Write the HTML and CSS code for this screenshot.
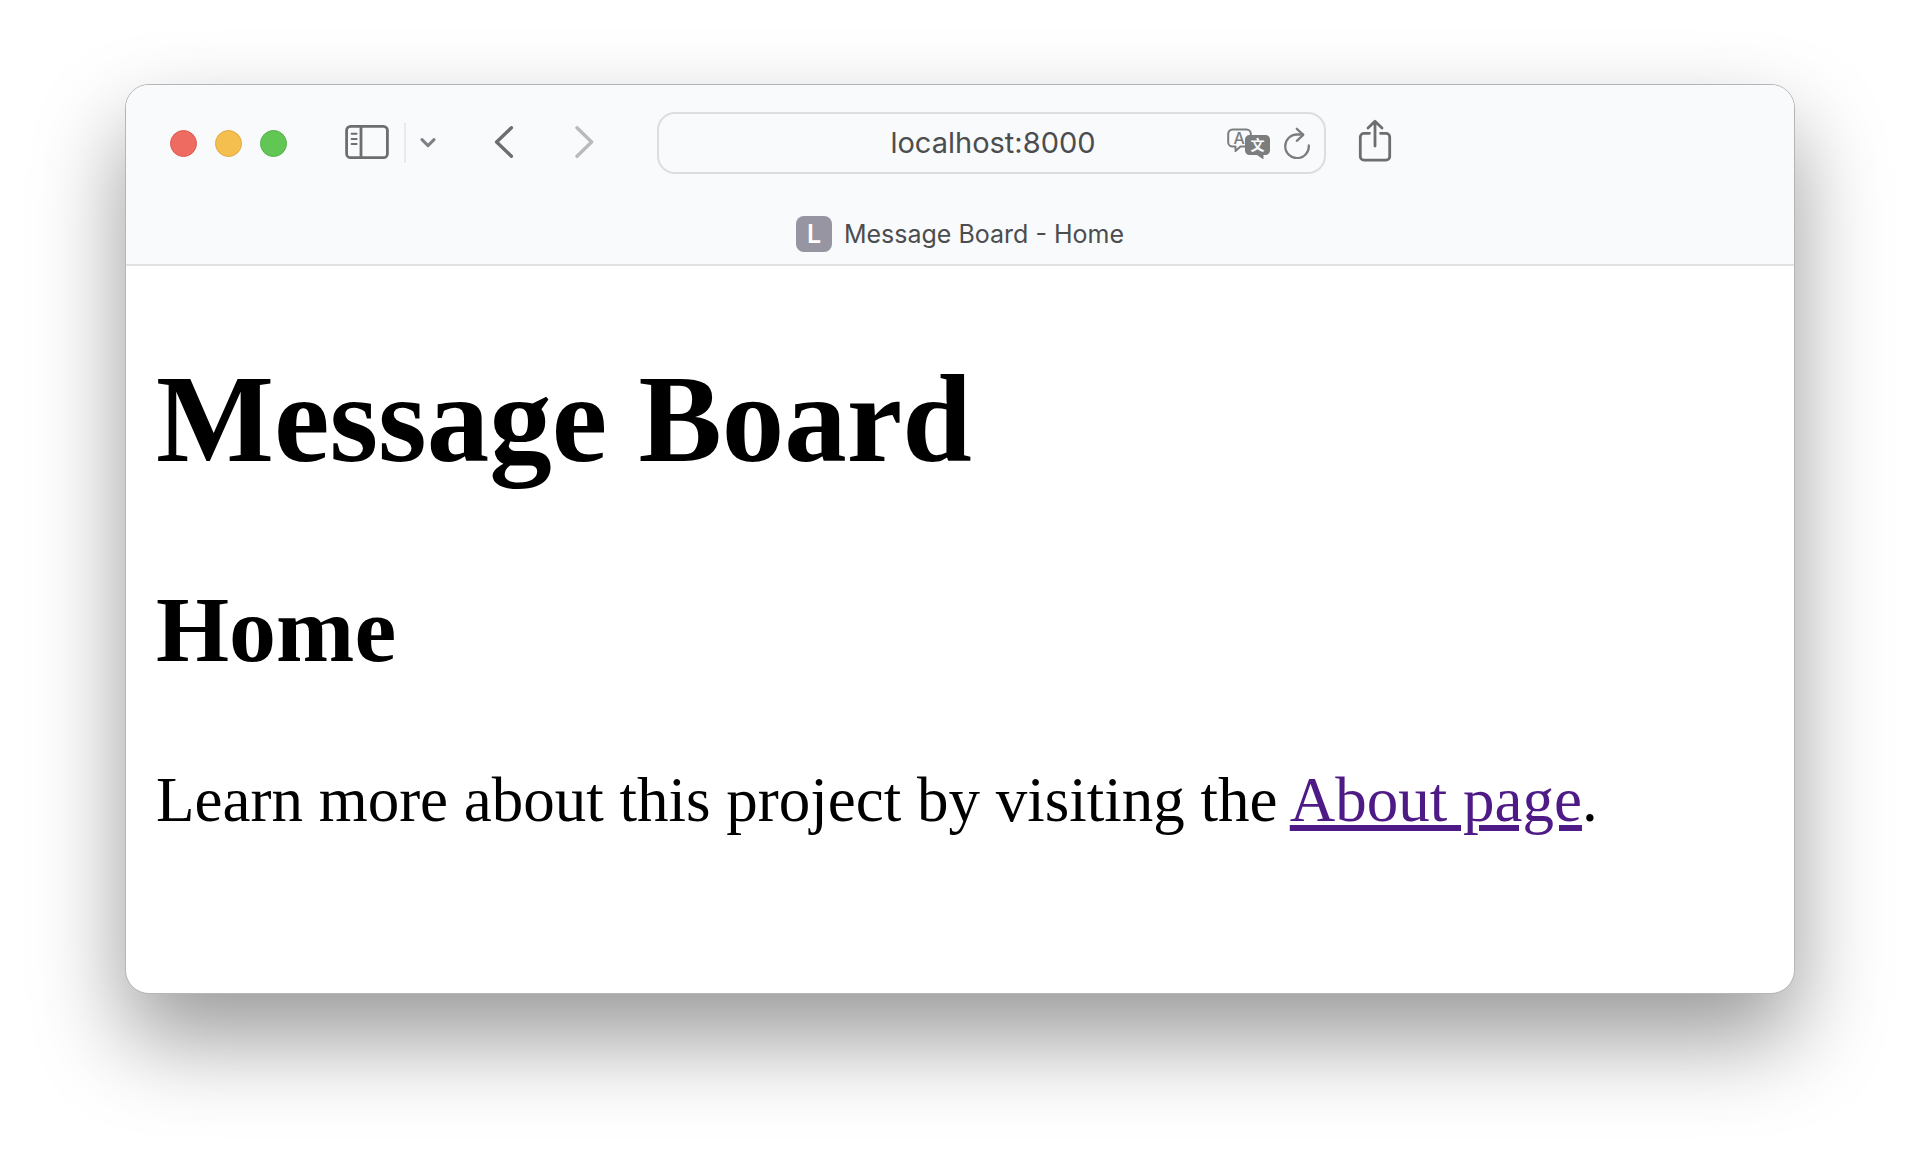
FILE: index.html
```html
<!DOCTYPE html>
<html lang="en">
<head>
<meta charset="utf-8">
<title>Message Board - Home</title>
<link rel="stylesheet" href="styles.css">
</head>
<body>
<div class="window">
  <header class="chrome">
    <div class="toolbar">
      <div class="lights">
        <button class="light light-close" aria-label="Close"></button>
        <button class="light light-minimize" aria-label="Minimize"></button>
        <button class="light light-zoom" aria-label="Zoom"></button>
      </div>
      <div class="sidebar-group">
        <button class="icon-button" aria-label="Show sidebar">
          <svg width="44" height="38" viewBox="0 0 44 38" fill="none" stroke="#6e6e71" stroke-width="2.8" stroke-linecap="round"><rect x="1.6" y="2.300" width="40.800" height="31.400" rx="4"/><path d="M16 3v30"/><path d="M6.600 9.800h5M6.600 15h5M6.600 20h5" stroke-width="2"/></svg>
        </button>
        <span class="divider"></span>
        <button class="icon-button" aria-label="Tab groups">
          <svg width="16" height="12" viewBox="0 0 16 12" fill="none" stroke="#7f7f86" stroke-width="3" stroke-linecap="round" stroke-linejoin="round"><path d="M2 2.600l6 6 6-6"/></svg>
        </button>
      </div>
      <nav class="history">
        <button class="icon-button" aria-label="Back">
          <svg width="20" height="36" viewBox="0 0 20 36" fill="none" stroke="#6e6e71" stroke-width="3.400" stroke-linecap="round" stroke-linejoin="round"><path d="M17.400 2.800L2.600 17l14.800 14.200"/></svg>
        </button>
        <button class="icon-button" aria-label="Forward">
          <svg width="20" height="36" viewBox="0 0 20 36" fill="none" stroke="#b9babc" stroke-width="3.400" stroke-linecap="round" stroke-linejoin="round"><path d="M3 2.800L17.600 17 3 31.200"/></svg>
        </button>
      </nav>
      <div class="address">
        <input class="address-input" type="text" value="localhost:8000" aria-label="Address">
        <button class="icon-button" aria-label="Translate">
          <svg width="43" height="32" viewBox="0 0 43 32"><path d="M18 19.500h-4.500L8.500 24V19.500H5.500a4.300 4.300 0 0 1-4.300-4.300V6.800A4.300 4.300 0 0 1 5.500 2.500h14a4.300 4.300 0 0 1 4.300 4.300V8" fill="none" stroke="#7c7e7e" stroke-width="2" stroke-linejoin="round"/><text class="glyph-latin" x="12.200" y="17" text-anchor="middle">A</text><path d="M22.500 8h16a4.500 4.500 0 0 1 4.500 4.500v11a4.500 4.500 0 0 1-4.500 4.500h-2v4.500l-6.500-4.500h-7.500A4.500 4.500 0 0 1 18 23.500v-11a4.500 4.500 0 0 1 4.500-4.500z" fill="#7c7e7e"/><text class="glyph-han" x="30.500" y="23" text-anchor="middle">文</text></svg>
        </button>
        <button class="icon-button" aria-label="Reload">
          <svg width="26" height="32" viewBox="0 0 26 32" fill="none" stroke="#7c7e7e" stroke-width="2.300" stroke-linecap="round" stroke-linejoin="round"><path d="M24.800 18.500A11.800 11.800 0 1 1 13 7.500h6"/><path d="M12.800 1.800l6.500 6-6.500 6"/></svg>
        </button>
      </div>
      <button class="icon-button" aria-label="Share">
        <svg width="34" height="48" viewBox="0 0 34 48" fill="none" stroke="#6e6e71" stroke-width="2.800" stroke-linecap="round" stroke-linejoin="round"><path d="M11.500 14.300H6A3.700 3.700 0 0 0 2.300 18v19.500A3.700 3.700 0 0 0 6 41.200h22a3.700 3.700 0 0 0 3.700-3.700V18A3.700 3.700 0 0 0 28 14.300h-5.500"/><path d="M17 27V2.500M10 9l7-6.800L24 9"/></svg>
      </button>
    </div>
    <div class="tab">
      <span class="tab-badge">L</span>
      <span class="tab-title">Message Board - Home</span>
    </div>
  </header>
  <main class="page">
    <h1 class="site-title">Message Board</h1>
    <h2 class="page-title">Home</h2>
    <p class="intro">Learn more about this project by visiting the <a class="link" href="#about">About page</a>.</p>
  </main>
</div>
</body>
</html>
```
FILE: styles.css
```css
* {
  box-sizing: border-box;
}

body {
  min-height: 100vh;
  margin: 0;
  padding: 84px 125px;
  background: #fff;
}

.window {
  overflow: hidden;
  border: 1px solid #b4b5b6;
  border-radius: 24px;
  background: #fff;
  box-shadow: 0 45px 90px rgba(0, 0, 0, 0.4);
}

.chrome {
  padding: 27px 0 12px;
  border-bottom: 2px solid #e0e1e3;
  background: #f9fafc;
  font-family: Inter, "Liberation Sans", sans-serif;
}

.toolbar {
  display: flex;
  align-items: center;
  padding: 0 44px;
}

.lights {
  display: flex;
  gap: 18px;
  margin-right: 58px;
}

.light {
  width: 27px;
  height: 27px;
  padding: 0;
  border: 1px solid;
  border-radius: 50%;
}

.light-close {
  border-color: #dc5b50;
  background: #ed6b60;
}

.light-minimize {
  border-color: #dfa942;
  background: #f5bf50;
}

.light-zoom {
  border-color: #55b047;
  background: #62c655;
}

.icon-button {
  display: flex;
  padding: 0;
  border: 0;
  background: none;
}

.sidebar-group {
  display: flex;
  align-items: center;
  margin-right: 58px;
}

.divider {
  width: 2px;
  height: 40px;
  margin: 0 14px 0 15px;
  background: #e8e9eb;
}

.history {
  display: flex;
  gap: 60px;
  margin-right: 63px;
}

.address {
  display: flex;
  flex: 0 1 669px;
  align-items: center;
  gap: 14px;
  min-width: 0;
  height: 62px;
  margin-right: 32px;
  padding: 0 14px 0 114px;
  border: 2px solid #dcdddf;
  border-radius: 18px;
}

.address-input {
  flex: 1;
  width: 100%;
  min-width: 0;
  padding: 0;
  border: 0;
  outline: 0;
  background: none;
  color: #4c4d4e;
  font: 29px/40px Inter, "Liberation Sans", sans-serif;
  text-align: center;
}

.glyph-latin {
  fill: #7c7e7e;
  font: 500 16px Inter, sans-serif;
}

.glyph-han {
  fill: #f9fafc;
  font: bold 14px "Noto Sans CJK SC", sans-serif;
}

.tab {
  display: flex;
  align-items: center;
  justify-content: center;
  gap: 12px;
  margin-top: 42px;
}

.tab-badge {
  width: 36px;
  border-radius: 8px;
  background: #9695a1;
  color: #fff;
  font-size: 25px;
  font-weight: 600;
  line-height: 36px;
  text-align: center;
}

.tab-title {
  color: #4c4d4e;
  font-size: 25px;
  line-height: 36px;
}

.page {
  padding: 81px 30px 157px;
  color: #000;
  font-family: "Liberation Serif", serif;
}

.site-title {
  margin: 0 0 84px;
  font-size: 125px;
  line-height: 144px;
}

.page-title {
  margin: 0 0 81px;
  font-size: 94px;
  line-height: 108px;
}

.intro {
  margin: 0;
  font-size: 63px;
  line-height: 72px;
}

.link {
  color: #4d1a86;
}
```
